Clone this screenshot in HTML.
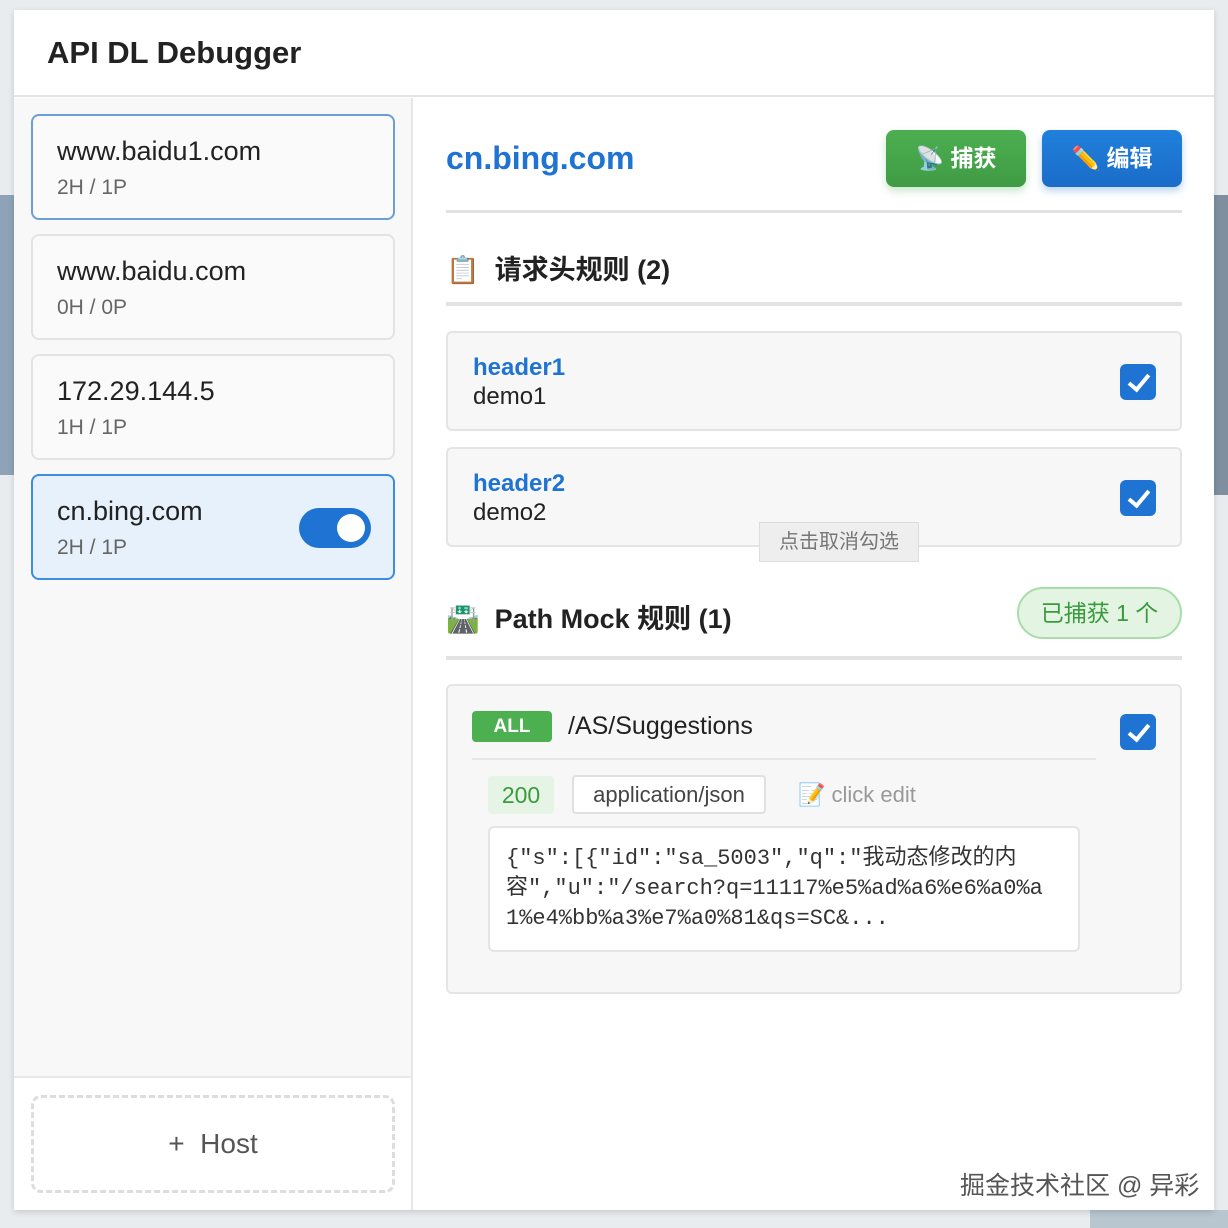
<!DOCTYPE html>
<html><head><meta charset="utf-8"><style>
*{box-sizing:border-box;margin:0;padding:0}
body{width:1228px;height:1228px;overflow:hidden;position:relative;background:#e8ecef;font-family:"Liberation Sans","Noto Sans CJK SC",sans-serif;color:#222}
.a{position:absolute}
.card{position:absolute;left:31px;width:364px;height:106px;border:2px solid #e3e3e3;border-radius:8px;background:#fafafa}
.card .h{position:absolute;left:24px;top:20px;font-size:27px;color:#222}
.card .s{position:absolute;left:24px;top:60px;font-size:21px;color:#666}
.rule{position:absolute;left:446px;width:736px;border:2px solid #e4e4e4;border-radius:6px;background:#f7f7f7}
.cb{position:absolute;width:36px;height:36px;border-radius:6px;background:#1f73d2}
.cb:after{content:"";position:absolute;left:13px;top:6px;width:8px;height:17px;border:solid #fff;border-width:0 4px 4px 0;transform:rotate(40deg)}
.sec{font-size:27px;font-weight:bold;color:#222}
.line{position:absolute;left:446px;width:736px;height:4px;background:#e2e2e2}
</style></head><body>
<div class="a" style="left:0;top:195px;width:14px;height:280px;background:#8fa3b8"></div>
<div class="a" style="left:1214px;top:195px;width:14px;height:300px;background:#7f8f9f"></div>
<div class="a" style="left:1090px;top:1210px;width:138px;height:18px;background:#b8c6d0"></div>
<div class="a" style="left:14px;top:10px;width:1200px;height:1200px;background:#fff;box-shadow:0 2px 6px rgba(0,0,0,.15)"></div>
<div class="a" style="left:14px;top:10px;width:1200px;height:87px;border-bottom:2px solid #e4e4e4;background:#fff"></div>
<div class="a" style="left:47px;top:35px;font-size:31px;font-weight:bold;color:#222">API DL Debugger</div>
<div class="a" style="left:14px;top:98px;width:399px;height:1112px;background:#f8f8f8;border-right:2px solid #e6e6e6"></div>
<div class="a" style="left:14px;top:1076px;width:399px;height:134px;background:#fff;border-top:2px solid #e8e8e8;border-right:2px solid #e6e6e6"></div>
<div class="card" style="top:114px;border-color:#6c9fd6"><div class="h">www.baidu1.com</div><div class="s">2H / 1P</div></div>
<div class="card" style="top:234px"><div class="h">www.baidu.com</div><div class="s">0H / 0P</div></div>
<div class="card" style="top:354px"><div class="h">172.29.144.5</div><div class="s">1H / 1P</div></div>
<div class="card" style="top:474px;border-color:#3d8ce0;background:#e6f1fc"><div class="h">cn.bing.com</div><div class="s">2H / 1P</div>
<div class="a" style="left:266px;top:32px;width:72px;height:40px;border-radius:20px;background:#1f73d2"><div class="a" style="left:38px;top:6px;width:28px;height:28px;border-radius:50%;background:#fff"></div></div></div>
<div class="a" style="left:31px;top:1095px;width:364px;height:98px;border:3px dashed #ddd;border-radius:10px;text-align:center;line-height:92px;font-size:28px;color:#555">+&nbsp; Host</div>

<div class="a" style="left:446px;top:140px;font-size:32px;font-weight:bold;color:#1f73d2">cn.bing.com</div>
<div class="a" style="left:886px;top:130px;width:140px;height:57px;border-radius:8px;background:linear-gradient(#4caf50,#3f9b44);box-shadow:0 4px 8px rgba(76,175,80,.3);color:#fff;font-size:23px;font-weight:bold;text-align:center;line-height:57px">📡 捕获</div>
<div class="a" style="left:1042px;top:130px;width:140px;height:57px;border-radius:8px;background:linear-gradient(#2080dc,#1a6cc8);box-shadow:0 4px 8px rgba(31,115,210,.3);color:#fff;font-size:23px;font-weight:bold;text-align:center;line-height:57px">✏️ 编辑</div>
<div class="line" style="top:210px;height:3px"></div>
<div class="a sec" style="left:446px;top:248px">📋 &nbsp;请求头规则 (2)</div>
<div class="line" style="top:302px"></div>
<div class="rule" style="top:331px;height:100px"><div class="a" style="left:25px;top:21px;font-size:24px;font-weight:bold;color:#1f73d2">header1</div><div class="a" style="left:25px;top:50px;font-size:24px;color:#222">demo1</div><div class="cb" style="left:672px;top:31px"></div></div>
<div class="rule" style="top:447px;height:100px"><div class="a" style="left:25px;top:21px;font-size:24px;font-weight:bold;color:#1f73d2">header2</div><div class="a" style="left:25px;top:50px;font-size:24px;color:#222">demo2</div><div class="cb" style="left:672px;top:31px"></div></div>
<div class="a" style="left:759px;top:522px;width:160px;height:40px;background:#eee;border:1px solid #ddd;font-size:20px;color:#777;text-align:center;line-height:38px">点击取消勾选</div>
<div class="a sec" style="left:446px;top:597px">🛣️ &nbsp;Path Mock 规则 (1)</div>
<div class="a" style="left:1017px;top:587px;width:165px;height:52px;border:2px solid #a8dca8;border-radius:26px;background:#e3f4e3;color:#3a9a3e;font-size:23px;text-align:center;line-height:48px">已捕获 1 个</div>
<div class="line" style="top:656px"></div>
<div class="rule" style="top:684px;height:310px">
<div class="a" style="left:24px;top:25px;width:80px;height:31px;border-radius:4px;background:#4caf50;color:#fff;font-weight:bold;font-size:19px;text-align:center;line-height:31px">ALL</div>
<div class="a" style="left:120px;top:26px;font-size:25px;color:#222">/AS/Suggestions</div>
<div class="cb" style="left:672px;top:28px"></div>
<div class="a" style="left:24px;top:72px;width:624px;height:2px;background:#e6e6e6"></div>
<div class="a" style="left:40px;top:90px;width:66px;height:38px;background:#e6f4e6;border-radius:4px;color:#3a9a3e;font-size:23px;text-align:center;line-height:38px">200</div>
<div class="a" style="left:124px;top:89px;width:194px;height:39px;background:#fff;border:2px solid #e0e0e0;border-radius:4px;font-size:22px;color:#444;text-align:center;line-height:35px">application/json</div>
<div class="a" style="left:350px;top:96px;font-size:22px;color:#999">📝 click edit</div>
<div class="a" style="left:40px;top:140px;width:592px;height:126px;background:#fff;border:2px solid #e4e4e4;border-radius:6px;padding:16px 24px 16px 16px;font-family:'Liberation Mono','Noto Sans CJK SC',monospace;font-size:22px;line-height:30px;color:#333;word-break:break-all">{"s":[{"id":"sa_5003","q":"我动态修改的内容","u":"/search?q=11117%e5%ad%a6%e6%a0%a1%e4%bb%a3%e7%a0%81&amp;qs=SC&amp;...</div>
</div>
<div class="a" style="left:960px;top:1166px;font-size:25px;color:#555">掘金技术社区 @ 异彩</div>
</body></html>
